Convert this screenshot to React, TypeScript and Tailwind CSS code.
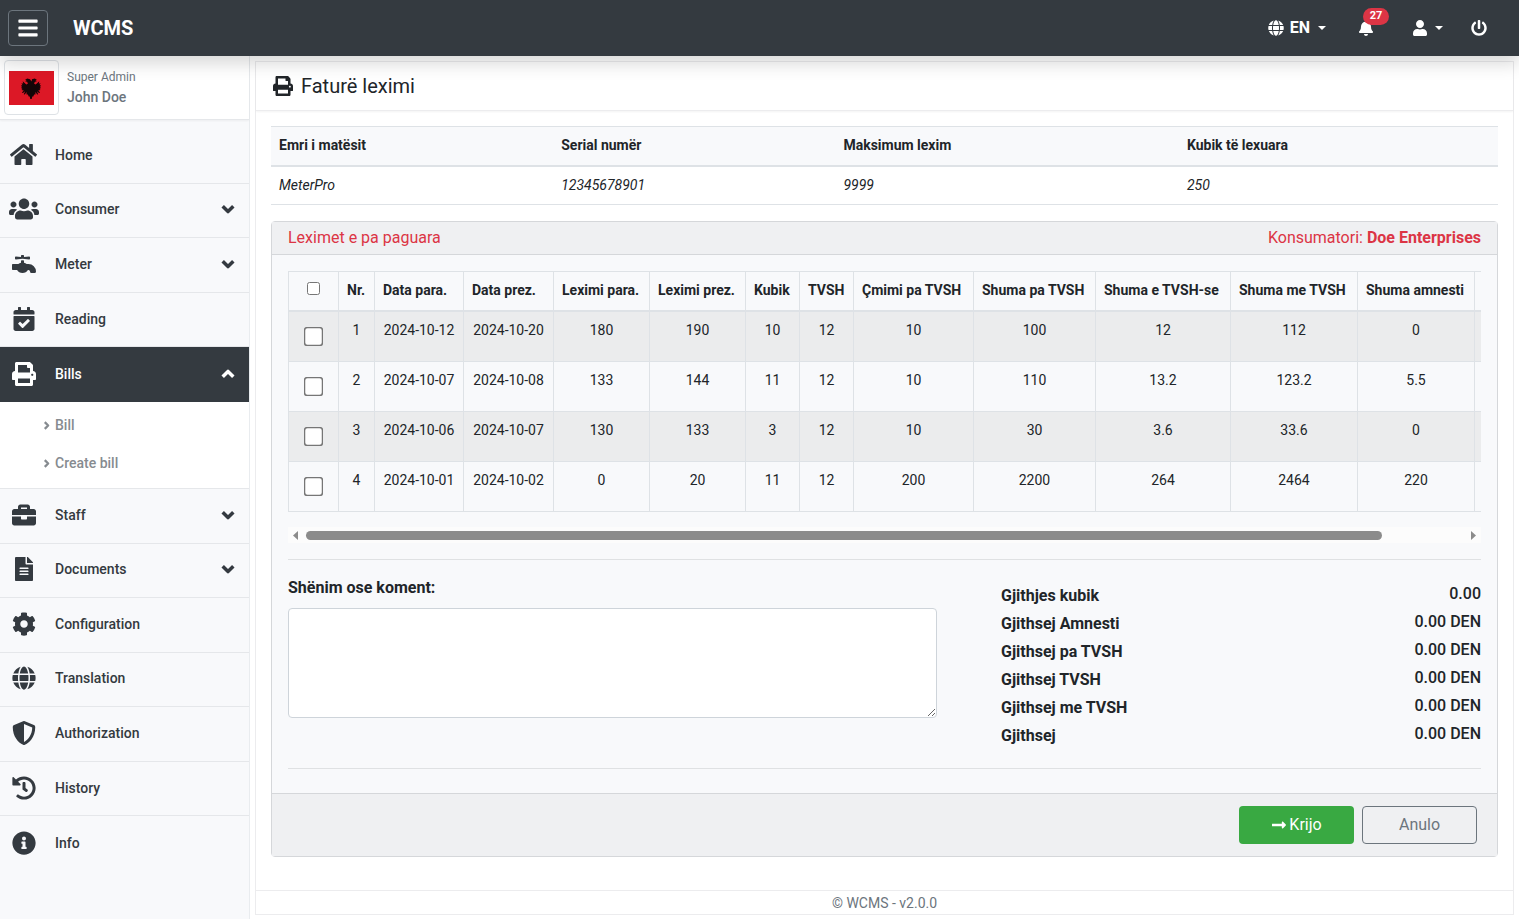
import React from "react";
import type { IconType } from "react-icons";
import {
  FaBars,
  FaBell,
  FaBriefcase,
  FaCalendarCheck,
  FaCog,
  FaFaucet,
  FaFileAlt,
  FaGlobe,
  FaHistory,
  FaHome,
  FaInfoCircle,
  FaLongArrowAltRight,
  FaPowerOff,
  FaPrint,
  FaShieldAlt,
  FaUser,
  FaUsers,
} from "react-icons/fa";

interface MenuItem {
  label: string;
  icon: IconType;
  // Wide glyphs need a bigger box to keep the same height
  iconSize?: string;
  expandable?: boolean;
  active?: boolean;
}

const topItems: MenuItem[] = [
  { label: "Home", icon: FaHome, iconSize: "size-[27px]" },
  { label: "Consumer", icon: FaUsers, iconSize: "size-[30px]", expandable: true },
  { label: "Meter", icon: FaFaucet, expandable: true },
  { label: "Reading", icon: FaCalendarCheck },
  { label: "Bills", icon: FaPrint, expandable: true, active: true },
];

const billItems = ["Bill", "Create bill"];

const bottomItems: MenuItem[] = [
  { label: "Staff", icon: FaBriefcase, expandable: true },
  { label: "Documents", icon: FaFileAlt, expandable: true },
  { label: "Configuration", icon: FaCog },
  { label: "Translation", icon: FaGlobe },
  { label: "Authorization", icon: FaShieldAlt },
  { label: "History", icon: FaHistory },
  { label: "Info", icon: FaInfoCircle },
];

const meterColumns = [
  { label: "Emri i matësit", value: "MeterPro", width: "w-[23%]" },
  { label: "Serial numër", value: "12345678901", width: "w-[23%]" },
  { label: "Maksimum lexim", value: "9999", width: "w-[28%]" },
  { label: "Kubik të lexuara", value: "250", width: "w-[26%]" },
];

const readingColumns = [
  { label: "Nr.", width: "w-[36px]" },
  { label: "Data para.", width: "w-[89px]" },
  { label: "Data prez.", width: "w-[90px]" },
  { label: "Leximi para.", width: "w-[96px]" },
  { label: "Leximi prez.", width: "w-[96px]" },
  { label: "Kubik", width: "w-[54px]" },
  { label: "TVSH", width: "w-[54px]" },
  { label: "Çmimi pa TVSH", width: "w-[120px]" },
  { label: "Shuma pa TVSH", width: "w-[122px]" },
  { label: "Shuma e TVSH-se", width: "w-[135px]" },
  { label: "Shuma me TVSH", width: "w-[127px]" },
  { label: "Shuma amnesti", width: "w-[117px]" },
];

const readings = [
  ["1", "2024-10-12", "2024-10-20", "180", "190", "10", "12", "10", "100", "12", "112", "0"],
  ["2", "2024-10-07", "2024-10-08", "133", "144", "11", "12", "10", "110", "13.2", "123.2", "5.5"],
  ["3", "2024-10-06", "2024-10-07", "130", "133", "3", "12", "10", "30", "3.6", "33.6", "0"],
  ["4", "2024-10-01", "2024-10-02", "0", "20", "11", "12", "200", "2200", "264", "2464", "220"],
];

const totals = [
  { label: "Gjithjes kubik", value: "0.00" },
  { label: "Gjithsej Amnesti", value: "0.00 DEN" },
  { label: "Gjithsej pa TVSH", value: "0.00 DEN" },
  { label: "Gjithsej TVSH", value: "0.00 DEN" },
  { label: "Gjithsej me TVSH", value: "0.00 DEN" },
  { label: "Gjithsej", value: "0.00 DEN" },
];

const Caret = () => (
  <svg viewBox="0 0 8 4" className="w-2 h-1" fill="currentColor" aria-hidden="true">
    <path d="M0 0h8L4 4z" />
  </svg>
);

const Chevron: React.FC<{ className: string }> = ({ className }) => (
  <svg viewBox="0 0 14 14" className={className} fill="none" stroke="currentColor" strokeWidth="3.5" strokeLinejoin="round" aria-hidden="true">
    <path d="M1.700 4.300L7 9.600l5.300-5.300" />
  </svg>
);

const AlbanianFlag = () => (
  <svg viewBox="0 0 45 34" className="w-full" role="img" aria-label="Albania">
    <rect width="45" height="34" fill="#dc1826" />
    <path
      fill="#140507"
      d="M22.5 10.500l-1.500-2.200-2.800-.7-2.200 1.400 1.600.4-1.400 1 2 .4.700 1.900-1.600.8-3.600-3.300.5 2.500-1.700-.6.900 2.200-1.500.1 1.300 1.800-1.300.5 1.600 1.400-1 .9 2.300.4-1.900 2.200 1 .4 2.200-1.800-1.300 3 1 .4 1.800-2.700-.1 2.600 1.400.1.800 1.800 1 .2.600 2.300h1.400l.6-2.300 1-.2.800-1.800 1.400-.1-.1-2.600 1.800 2.700 1-.4-1.300-3 2.200 1.800 1-.4-1.900-2.200 2.300-.4-1-.9 1.600-1.400-1.300-.5 1.300-1.800-1.500-.1.900-2.200-1.700.6.500-2.500-3.600 3.300-1.600-.8.700-1.900 2-.4-1.400-1 1.600-.4-2.200-1.400-2.800.7z"
    />
  </svg>
);

const MenuLink: React.FC<{ item: MenuItem }> = ({ item }) => (
  <li className="border-b border-[#e5e7ea] last:border-b-0">
    <a
      href="#"
      aria-current={item.active ? "page" : undefined}
      className={`flex h-full items-center pr-3.5 pb-0.5 text-sm font-medium ${
        item.active ? "bg-[#343a40] text-white" : "text-[#343a40]"
      }`}
    >
      <span className="flex w-[47px] justify-center">
        <item.icon className={item.iconSize ?? "size-6"} />
      </span>
      <span className="ml-2">{item.label}</span>
      {item.expandable && (
        <Chevron className={item.active ? "ml-auto size-3.5 rotate-180" : "ml-auto size-3.5"} />
      )}
    </a>
  </li>
);

const Navbar = () => (
  <header className="relative z-10 flex h-14 shrink-0 items-center justify-between bg-[#343a40] pl-2 pr-8 text-white shadow-[0_8px_16px_rgba(0,0,0,0.15)]">
    <div className="flex items-center gap-[25px]">
      <button
        type="button"
        aria-label="Toggle menu"
        className="flex h-9 w-10 items-center justify-center rounded-sm border border-[#6c757d]"
      >
        <FaBars className="size-[22px]" />
      </button>
      <a href="#" className="text-xl font-bold">WCMS</a>
    </div>
    <nav className="flex items-center">
      <button type="button" className="flex items-center gap-1.5 font-bold">
        <FaGlobe className="size-4" />
        EN
        <span className="ml-0.5"><Caret /></span>
      </button>
      <button type="button" aria-label="Notifications" className="relative ml-8">
        <FaBell className="size-4" />
        <span className="absolute -top-3 left-[5px] flex h-[17px] w-[26px] items-center justify-center rounded-full bg-[#dc3545] text-[11px] font-bold">
          27
        </span>
      </button>
      <button type="button" aria-label="Account" className="ml-[38px] flex items-center gap-[7px]">
        <FaUser className="size-4" />
        <Caret />
      </button>
      <button type="button" aria-label="Log out" className="ml-7">
        <FaPowerOff className="size-4" />
      </button>
    </nav>
  </header>
);

const Sidebar = () => (
  <aside className="w-[250px] shrink-0 border-r border-[#e9ecef] bg-[#f8f9fb]">
    <div className="flex h-16 items-center gap-2 border-b border-[#e5e7ea] bg-white pl-1 shadow-xs">
      <div className="flex h-[55px] w-[55px] items-center rounded-sm border border-[#dee2e6] bg-white p-1">
        <AlbanianFlag />
      </div>
      <div className="pb-0.5 text-[#6c757d]">
        <div className="text-xs leading-5">Super Admin</div>
        <div className="text-sm leading-5 font-medium">John Doe</div>
      </div>
    </div>
    <nav className="pt-[9px]">
      <ul className="grid h-[273px] auto-rows-fr">
        {topItems.map((item) => (
          <MenuLink key={item.label} item={item} />
        ))}
      </ul>
      <ul className="border-b border-[#e5e7ea] bg-white pt-1 pb-1.5">
        {billItems.map((label) => (
          <li key={label}>
            <a href="#" className="flex h-[38px] items-center gap-1 pl-[42px] text-sm font-medium text-[#868b90]">
              <Chevron className="size-[9px] -rotate-90" />
              {label}
            </a>
          </li>
        ))}
      </ul>
      <ul className="grid h-[382px] auto-rows-fr">
        {bottomItems.map((item) => (
          <MenuLink key={item.label} item={item} />
        ))}
      </ul>
    </nav>
  </aside>
);

const MeterTable = () => (
  <table className="w-full table-fixed border-collapse border-y border-[#dee2e6] text-left text-sm">
    <thead className="bg-[#f8f9fb]">
      <tr className="h-[39px] border-b-2 border-[#dee2e6]">
        {meterColumns.map((col) => (
          <th key={col.label} className={`px-2 pb-0.5 font-bold ${col.width}`}>{col.label}</th>
        ))}
      </tr>
    </thead>
    <tbody>
      <tr className="h-[39px] italic">
        {meterColumns.map((col) => (
          <td key={col.label} className="px-2">{col.value}</td>
        ))}
      </tr>
    </tbody>
  </table>
);

const ReadingsTable = () => (
  <div>
    <div className="overflow-hidden">
      <table className="w-[1282px] table-fixed border-collapse text-center text-sm whitespace-nowrap">
        <thead>
          <tr className="h-[39px] border-b-2 border-[#dee2e6]">
            <th className="w-[50px] border border-b-2 border-[#dee2e6]">
              <input type="checkbox" aria-label="Select all" className="block mx-auto mb-1 size-[13px]" />
            </th>
            {readingColumns.map((col) => (
              <th key={col.label} className={`border border-b-2 border-[#dee2e6] px-2 pb-0.5 text-left font-bold ${col.width}`}>
                {col.label}
              </th>
            ))}
            <th className="border border-b-2 border-[#dee2e6]" />
          </tr>
        </thead>
        <tbody>
          {readings.map((row) => (
            <tr key={row[0]} className="h-[50px] first:h-[51px] align-top odd:bg-[#ebeced]">
              <td className="border border-[#dee2e6] pt-[18px]">
                <input type="checkbox" aria-label={`Select reading ${row[0]}`} className="block mx-auto size-[13px] scale-150" />
              </td>
              {row.map((value, i) => (
                <td key={readingColumns[i].label} className="border border-[#dee2e6] pt-2">{value}</td>
              ))}
              <td className="border border-[#dee2e6]" />
            </tr>
          ))}
        </tbody>
      </table>
    </div>
    {/* Scroll track */}
    <div className="mt-[15px] flex h-4 items-center gap-2 bg-[#fcfcfc] px-[5px] text-[#8b8b8b]">
      <svg viewBox="0 0 5 9" className="h-[9px] w-[5px]" fill="currentColor" aria-hidden="true">
        <path d="M5 0v9L0 4.500z" />
      </svg>
      <div className="flex-1">
        <div className="h-[9px] w-[93%] rounded-full bg-[#8b8b8b]" />
      </div>
      <svg viewBox="0 0 5 9" className="h-[9px] w-[5px]" fill="currentColor" aria-hidden="true">
        <path d="M0 0v9l5-4.500z" />
      </svg>
    </div>
  </div>
);

const BillCard = () => (
  <section className="mt-4 rounded-sm border border-[#d5d7da] bg-[#f8f9fb]">
    <div className="flex h-[33px] items-center justify-between border-b border-[#d5d7da] bg-[#eff0f2] px-4 text-[#dc3545]">
      <h2>Leximet e pa paguara</h2>
      <p>Konsumatori: <b>Doe Enterprises</b></p>
    </div>

    <div className="px-4 pt-4 pb-6">
      <ReadingsTable />

      <div className="mt-4 flex gap-16 border-y border-[#dfe1e3] pt-4 pb-6">
        <div className="flex-1">
          <label htmlFor="comment" className="mb-2 block font-bold">Shënim ose koment:</label>
          <textarea id="comment" className="block h-[110px] w-full rounded-sm border border-[#ced4da] bg-white p-2" />
        </div>
        <dl className="w-[480px]">
          {totals.map((total) => (
            <div key={total.label} className="flex h-7 justify-between">
              <dt className="pt-2 font-bold">{total.label}</dt>
              <dd className="pt-1.5 font-medium">{total.value}</dd>
            </div>
          ))}
        </dl>
      </div>
    </div>

    <div className="flex justify-end gap-2 border-t border-[#d5d7da] bg-[#eff0f2] px-5 py-3">
      <button type="button" className="flex h-[38px] w-[115px] items-center justify-center gap-0.5 rounded-sm bg-[#39a942] text-white">
        <FaLongArrowAltRight className="size-4" />
        Krijo
      </button>
      <button type="button" className="h-[38px] w-[115px] rounded-sm border border-[#6c757d] text-[#6c757d]">
        Anulo
      </button>
    </div>
  </section>
);

export default function App() {
  return (
    <div className="flex min-h-screen flex-col bg-white font-[Roboto,sans-serif] text-base text-[#212529]">
      <Navbar />
      <div className="flex flex-1">
        <Sidebar />
        <main className="mx-[5px] mt-[5px] mb-1 flex min-w-0 flex-1 flex-col border border-[#ececee]">
          <h1 className="flex h-[49px] items-center gap-2 border-b border-[#ececee] px-[17px] text-xl shadow-xs">
            <FaPrint className="size-5" />
            Faturë leximi
          </h1>
          <div className="flex-1 px-[15px] pt-[15px] pb-8">
            <MeterTable />
            <BillCard />
          </div>
          <footer className="border-t border-[#ececee] pt-0.5 text-center text-sm leading-[21px] text-[#6c757d]">
            © WCMS - v2.0.0
          </footer>
        </main>
      </div>
    </div>
  );
}
